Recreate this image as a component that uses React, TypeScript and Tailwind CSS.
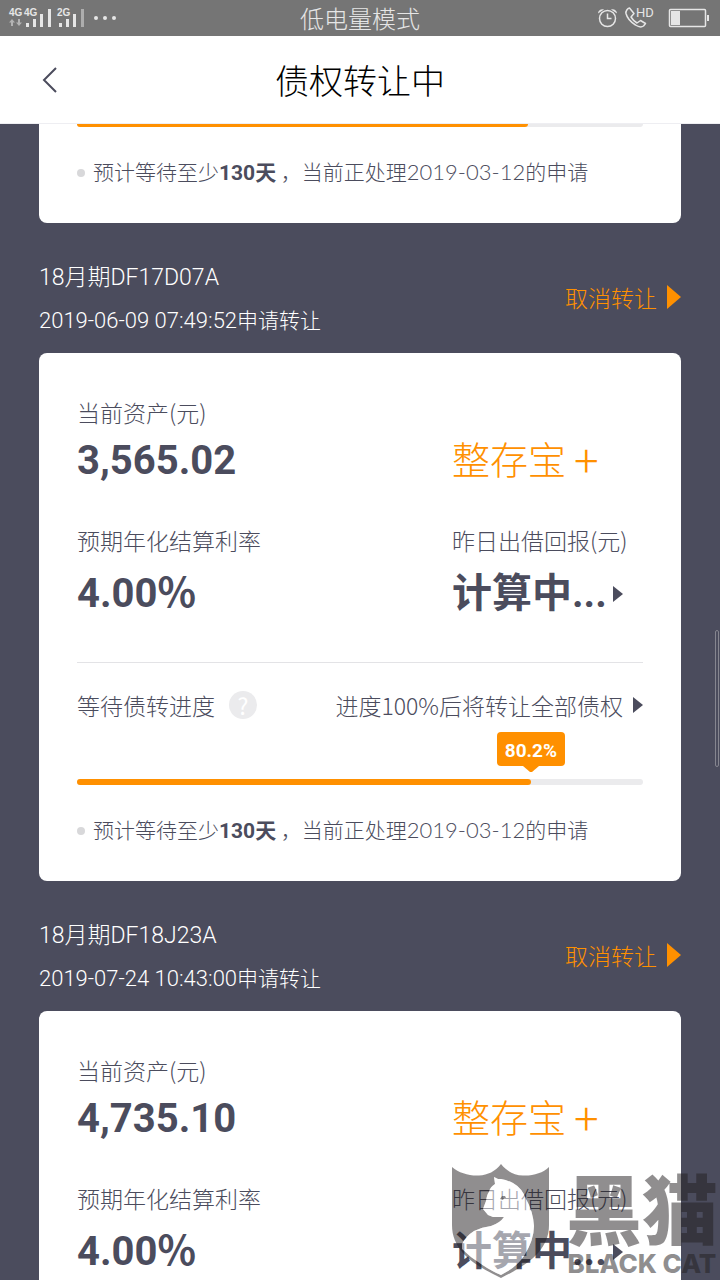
import React from 'react';

interface Transfer {
  id: string;
  name: string;
  appliedAt: string;
  asset: string;
  rate: string;
  progress: number;
  waitDays: number;
  processing: string;
}

const transfers: Transfer[] = [
  { id: 'DF17D07A', name: '18月期DF17D07A', appliedAt: '2019-06-09 07:49:52', asset: '3,565.02', rate: '4.00', progress: 80.2, waitDays: 130, processing: '2019-03-12' },
  { id: 'DF18J23A', name: '18月期DF18J23A', appliedAt: '2019-07-24 10:43:00', asset: '4,735.10', rate: '4.00', progress: 80.2, waitDays: 130, processing: '2019-03-12' },
];

const TEXT_FONT = "font-['Roboto','Noto_Sans_CJK_SC',sans-serif]";
const BOLD_FONT = "font-['Roboto','Noto_Sans_CJK_SC',sans-serif] font-bold";

const CAT = 'M42 13l4 2 3 0q6 1 12 4q9 5 13 16q7 12 8 27q0 14-10 30q-6 9-16 15l-7 4q-10-4-20-11-10-6-19-15v-5q4-8 12-13 8-4 17-5q9-3 13-9-6 0-11 0l-5-2-5-6 3-8q1-7 3-9 1-5 6-8z';

const StatusBar: React.FC = () => (
  <div className="relative flex h-9 shrink-0 items-center justify-between bg-[#757575] text-[#e6e6e6]">
    <svg className="ml-2 h-9 w-28" viewBox="8 0 112 36" fill="currentColor" aria-hidden="true">
      <g fontFamily="Liberation Sans" fontWeight="bold" fontSize="10">
        <text x="9" y="16">4G</text>
        <text x="24" y="16">4G</text>
        <text x="57" y="16">2G</text>
      </g>
      <path opacity=".55" d="M12 19l3 3.5h-2V26h-2v-3.5H9zM19 26l-3-3.5h2V19h2v3.5h2z" />
      <path d="M26 23h3v4h-3zM33 19h3v8h-3zM40 14h3v13h-3zM48 9h3v18h-3zM59 23h3v4h-3zM66 19h3v8h-3zM73 14h3v13h-3z" />
      <path opacity=".5" d="M81 9h3v18h-3z" />
      <circle cx="96" cy="18" r="2" />
      <circle cx="105" cy="18" r="2" />
      <circle cx="114" cy="18" r="2" />
    </svg>
    <span className="absolute inset-x-0 text-center text-2xl leading-8">低电量模式</span>
    <svg className="mr-2 h-9 w-[116px]" viewBox="596 0 116 36" fill="none" stroke="currentColor" strokeWidth="1.5" aria-hidden="true">
      <circle cx="607.5" cy="18.5" r="8" />
      <path d="M607.5 13.5v5h4" />
      <path fill="currentColor" stroke="none" d="M598 13.5c0-3 3-5 6-4zM617 13.5c0-3-3-5-6-4z" />
      <path strokeLinejoin="round" d="M629.5 8l4.5 5.5-3 3.5c1.5 2.5 3.5 4.5 6 6l3.5-2.5 5 3-2 2.5c-2 1.5-5 1-8-1-4-2.5-8.5-7.500-9.500-11.500-.5-2.500 1.500-5 3.500-5.500z" />
      <text x="636" y="17" fill="currentColor" stroke="none" fontFamily="Roboto" fontSize="13" fontWeight="400">HD</text>
      <rect x="669.5" y="9.5" width="36" height="17" rx="1" />
      <path fill="currentColor" stroke="none" d="M671 11h9v14h-9zM707 15h2v6h-2z" />
    </svg>
  </div>
);

const Header: React.FC = () => (
  <header className="relative flex h-[88px] shrink-0 items-center border-b border-[#eeeef2] bg-white">
    <button type="button" aria-label="返回" className="z-10 ml-[38px] flex h-12 w-6 items-center justify-center text-[#4b4c5d]">
      <svg className="h-7 w-4" viewBox="0 0 16 28" fill="none" stroke="currentColor" strokeWidth="2">
        <path d="M14 2L2 14l12 12" />
      </svg>
    </button>
    <h1 className="absolute inset-x-0 text-center text-[34px] leading-12 text-black">债权转让中</h1>
  </header>
);

const Caret: React.FC<{ className: string }> = ({ className }) => (
  <svg className={className} viewBox="0 0 10 16" preserveAspectRatio="none" fill="currentColor" aria-hidden="true">
    <path d="M0 0l10 8-10 8z" />
  </svg>
);

const ProgressBar: React.FC<{ value: number; tag?: boolean }> = ({ value, tag }) => (
  <div className="relative h-1.5 rounded-full bg-[#ebebed]" role="progressbar" aria-valuenow={value}>
    <div className="h-full rounded-full bg-[#ff9000]" style={{ width: `${value}%` }} />
    {tag && (
      <div
        className="absolute bottom-[19px] flex -translate-x-1/2 flex-col items-center"
        style={{ left: `${value}%` }}
      >
        <span className={`${BOLD_FONT} flex h-[34px] w-[68px] items-center justify-center rounded bg-[#ff9000] pt-1 text-[19px] text-white`}>
          {value}%
        </span>
        <svg className="absolute top-full h-1.5 w-4" viewBox="0 0 16 6" fill="#ff9000">
          <path d="M0 0h16L9 6H7z" />
        </svg>
      </div>
    )}
  </div>
);

const WaitNote: React.FC<{ days: number; date: string }> = ({ days, date }) => (
  <div className="mt-7 flex h-8 items-center gap-2 text-[21px] leading-8 whitespace-nowrap">
    <span className="mt-1 size-2 rounded-full bg-[#d8d8da]" />
    <p>
      预计等待至少<b className={`${BOLD_FONT} leading-6`}>{days}天</b> ，当前正处理
      <span className="font-['Lato','Noto_Sans_CJK_SC',sans-serif] text-[22px] leading-6">{date}</span>的申请
    </p>
  </div>
);

const TransferCard: React.FC<{ item: Transfer }> = ({ item }) => (
  <section>
    <div className="flex items-center justify-between pt-[38px] pb-4 text-white">
      <div>
        <h2 className={`${TEXT_FONT} h-8 pt-px text-[23px] leading-8`}>{item.name}</h2>
        <p className="mt-2.5 h-[34px] text-[21px] leading-8">
          <span className={`${TEXT_FONT} text-[22px] leading-6`}>{item.appliedAt}</span>申请转让
        </p>
      </div>
      <button type="button" className="flex items-center gap-2.5 pb-1 text-[23px] leading-8 text-[#ff9000]">
        取消转让
        <Caret className="h-6 w-3.5" />
      </button>
    </div>

    <div className="rounded-lg bg-white px-[38px] pt-[43px] pb-9">
      <div className="grid grid-cols-[375px_1fr] whitespace-nowrap">
        <div>
          <p className="text-[23px] leading-8">当前资产(元)</p>
          <p className={`${BOLD_FONT} mt-[9px] text-[40px] leading-12`}>{item.asset}</p>
        </div>
        <p className="mt-[38px] flex h-12 items-center gap-2 text-[38px] leading-12 text-[#ff9000]">
          整存宝 <span className="text-[46px]">+</span>
        </p>
        <div className="mt-[39px]">
          <p className="text-[23px] leading-8">预期年化结算利率</p>
          <p className={`${BOLD_FONT} mt-3.5 h-12 text-[40px] leading-12`}>
            {item.rate}
            <span className="font-['Noto_Sans_CJK_SC',sans-serif] leading-8">%</span>
          </p>
        </div>
        <div className="mt-[39px]">
          <p className="text-[23px] leading-8">昨日出借回报(元)</p>
          <button type="button" className={`${BOLD_FONT} mt-3.5 flex h-12 items-center gap-1.5 text-[40px] leading-12`}>
            计算中...
            <Caret className="h-4 w-2.5" />
          </button>
        </div>
      </div>

      <div className="mt-11 flex items-center justify-between border-t border-[#e3e3e6] pt-[26px] text-[23px] leading-8">
        <div className="flex items-center gap-3.5">
          等待债转进度
          <button type="button" aria-label="说明" className="flex size-7 items-center justify-center rounded-full bg-[#ebebed] font-normal text-white">?</button>
        </div>
        <button type="button" className="flex items-center gap-2.5">
          进度100%后将转让全部债权
          <Caret className="h-4 w-2.5" />
        </button>
      </div>
      <div className="mt-[58px]">
        <ProgressBar value={item.progress} tag />
      </div>
      <WaitNote days={item.waitDays} date={item.processing} />
    </div>
  </section>
);

const Watermark: React.FC = () => (
  <div className="pointer-events-none absolute right-0.5 bottom-0 flex items-start gap-4 text-[#211e1f]/50">
    <svg className="h-[115px] w-[98px]" viewBox="0 0 98 115">
      <path
        fill="currentColor"
        fillRule="evenodd"
        d={`M0 3c7 6 17 9 27 8.500 9-.5 16-4 22-11.500 6 7.500 13 11 22 11.500 10 .5 20-2.500 26-8.500v58c0 26-22 40-48 53C22 101 0 87 0 61z${CAT}`}
      />
      <path fill="#fff" fillOpacity=".5" d={CAT} />
      <path fill="currentColor" d="M48 35l2-3 3 0 1 2-2 0-1 2z" />
    </svg>
    <div className="flex flex-col items-center whitespace-nowrap">
      <span className="text-[76px] leading-[84px] font-black">黑猫</span>
      <span className="font-['Inter',sans-serif] text-[26px] leading-8 font-extrabold">BLACK CAT</span>
    </div>
  </div>
);

export default function App() {
  return (
    <div className="relative flex h-screen flex-col overflow-hidden bg-[#4b4c5d] font-['Noto_Sans_CJK_SC',sans-serif] font-light text-[#4b4c5d]">
      <StatusBar />
      <Header />
      <main className="min-h-0 flex-1 overflow-hidden px-[39px]">
        {/* tail of the card that is scrolled under the header */}
        <div className="-mt-[3px] rounded-b-lg bg-white px-[38px] pb-9">
          <ProgressBar value={79.6} />
          <WaitNote days={130} date="2019-03-12" />
        </div>
        {transfers.map((t) => (
          <TransferCard key={t.id} item={t} />
        ))}
      </main>
      <div className="absolute top-[630px] right-px h-[137px] w-1 rounded-sm border border-[#85858f]" />
      <Watermark />
    </div>
  );
}
